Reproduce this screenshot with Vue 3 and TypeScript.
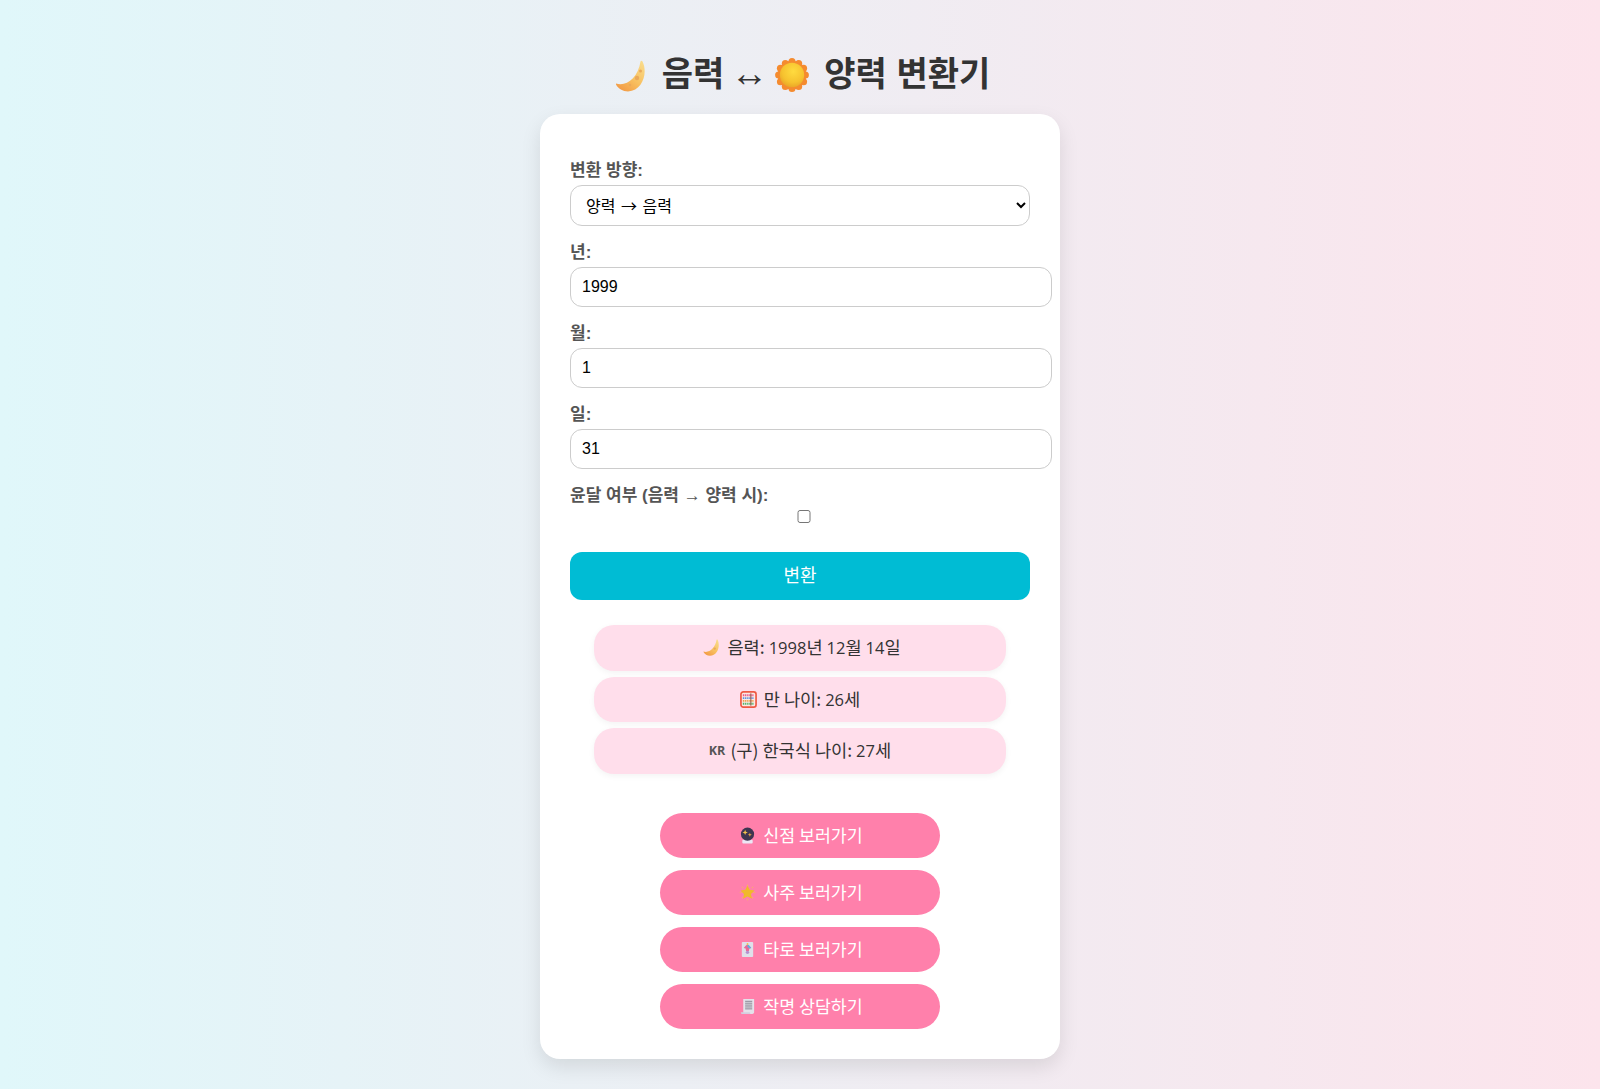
<script setup lang="ts">
import { ref } from 'vue'

const direction = ref('solar')
const year = ref('1999')
const month = ref('1')
const day = ref('31')
const leap = ref(false)

const scallops = Array.from({ length: 12 }, (_, i) => {
  const a = (i * Math.PI) / 6
  return { x: 16 + 12.6 * Math.cos(a), y: 16 + 12.6 * Math.sin(a) }
})
</script>

<template>
  <div class="page">
    <h1 class="title">
      <svg class="ti" viewBox="0 0 32 32">
        <defs>
          <linearGradient id="moonG" x1="0.9" y1="0" x2="0.2" y2="1">
            <stop offset="0" stop-color="#f9dc8c" />
            <stop offset="0.55" stop-color="#f8c060" />
            <stop offset="1" stop-color="#f29a45" />
          </linearGradient>
        </defs>
        <path d="M1 23.500C11 27 23 18 25.500 1.500C26 .5 27 .5 27.500 1.500C33 12 28 31 13 31.500C8 31.500 3 28.500 1 24.500Z" fill="url(#moonG)" />
        <circle cx="22" cy="18" r="2.200" fill="#eaa95a" />
        <circle cx="25.500" cy="11" r="1.500" fill="#eaa95a" />
        <circle cx="15" cy="25" r="1.300" fill="#eaa95a" />
      </svg>
      <span class="word">음력</span>
      <span class="arrow">↔</span>
      <svg class="sun" viewBox="0 0 32 32">
        <defs>
          <radialGradient id="sunG" cx="0.55" cy="0.35" r="0.75">
            <stop offset="0" stop-color="#ffdb3f" />
            <stop offset="0.6" stop-color="#f6c22f" />
            <stop offset="1" stop-color="#e59a24" />
          </radialGradient>
        </defs>
        <circle cx="16" cy="16" r="13.500" fill="#f58b2f" />
        <circle v-for="(s, i) in scallops" :key="i" :cx="s.x" :cy="s.y" r="3.300" fill="#f58b2f" />
        <circle cx="16" cy="16" r="11.500" fill="url(#sunG)" />
      </svg>
      <span class="word">양력 변환기</span>
    </h1>

    <main class="card">
      <label class="field-label">변환 방향:</label>
      <select v-model="direction" class="select">
        <option value="solar">양력 → 음력</option>
        <option value="lunar">음력 → 양력</option>
      </select>

      <label class="field-label">년:</label>
      <input v-model="year" class="text-input" type="number" />
      <label class="field-label">월:</label>
      <input v-model="month" class="text-input" type="number" />
      <label class="field-label">일:</label>
      <input v-model="day" class="text-input" type="number" />

      <label class="field-label">윤달 여부 (음력 → 양력 시):</label>
      <input v-model="leap" class="check" type="checkbox" />

      <button class="convert" type="button"><span class="convert-text">변환</span></button>

      <section class="results">
        <div class="pill pill-shift">
          <svg class="ei" viewBox="0 0 32 32">
            <path d="M1 23.500C11 27 23 18 25.500 1.500C26 .5 27 .5 27.500 1.500C33 12 28 31 13 31.500C8 31.500 3 28.500 1 24.500Z" fill="url(#moonG)" />
            <circle cx="22" cy="18" r="2.200" fill="#eaa95a" />
          </svg>
          <span class="pill-text">음력: <span class="num">1998</span>년 <span class="num">12</span>월 <span class="num">14</span>일</span>
        </div>
        <div class="pill">
          <svg class="ei" viewBox="0 0 18 18">
            <rect x="1" y="1" width="16" height="16" rx="2.500" fill="#fbe9e4" stroke="#ef5a45" stroke-width="1.800" />
            <path d="M3 4.500h12" stroke="#e8578c" stroke-width="2" stroke-dasharray="1.300 .7" />
            <path d="M3 7.500h12" stroke="#5b8fe0" stroke-width="2" stroke-dasharray="1.300 .7" />
            <path d="M3 10.500h12" stroke="#f0a04a" stroke-width="2" stroke-dasharray="1.300 .7" />
            <path d="M3 13.500h12" stroke="#4fb56b" stroke-width="2" stroke-dasharray="1.300 .7" />
            <rect x="11" y="2.500" width="1" height="13" fill="#8a4a3a" />
          </svg>
          <span class="pill-text">만 나이: <span class="num">26</span>세</span>
        </div>
        <div class="pill">
          <span class="kr">KR</span>
          <span class="pill-text">(구) 한국식 나이: <span class="num">27</span>세</span>
        </div>
      </section>

      <nav class="links">
        <a class="link">
          <svg class="li" viewBox="0 0 16 18">
            <rect x="2.500" y="13.500" width="11" height="4" rx="1" fill="#ece6f5" />
            <circle cx="8" cy="7.500" r="7" fill="#3d3550" />
            <path d="M5.500 3l.8 2 2 .8-2 .8-.8 2-.8-2-2-.8 2-.8z" fill="#f3c14b" />
            <path d="M10.500 6l.6 1.600 1.600.6-1.600.6-.6 1.600-.6-1.600-1.600-.6 1.600-.6z" fill="#f0a64a" />
          </svg>
          <span class="link-text">신점 보러가기</span>
        </a>
        <a class="link">
          <svg class="li" viewBox="0 0 18 18">
            <path d="M9 1.500l2.300 4.700 5.200.7-3.800 3.600 1 5.200L9 13.200l-4.700 2.500 1-5.200L1.500 6.900l5.200-.7z" fill="#f0b92a" />
            <path d="M9 0l.6 2.500h-1.200zM18 9l-2.500.6v-1.200zM0 9l2.500-.6v1.200zM9 18l-.6-2.500h1.200zM2.500 2.500l2 1.500-.6.6zM15.500 2.500l-1.500 2-.6-.6zM2.500 15.500l1.500-2 .6.6zM15.500 15.500l-2-1.500.6-.6z" fill="#f5c842" />
          </svg>
          <span class="link-text">사주 보러가기</span>
        </a>
        <a class="link">
          <svg class="li" viewBox="0 0 16 18">
            <rect x="2" y="1" width="12" height="16" rx="1" fill="#dfe0ea" />
            <path d="M4 7.500l2-2.500 2-1.500 2 1.500 2 2.500-2 .5-.5 2.500h-3L6 8z" fill="#e86a9a" />
            <path d="M8 3.500l2 1.500 2 2.500-2 .5-2-2z" fill="#5db4e0" />
            <circle cx="8" cy="3.200" r="1" fill="#f3c14b" />
            <circle cx="8" cy="12" r="1.800" fill="#b48fd0" />
          </svg>
          <span class="link-text">타로 보러가기</span>
        </a>
        <a class="link">
          <svg class="li" viewBox="0 0 16 18">
            <path d="M3.500 1h11.500v13.500a2 2 0 0 1-2 2.500H2.500C4 17 3.500 15 3.500 14z" fill="#e4e2ea" />
            <path d="M1 15h9.500c0 1 .5 2 1.500 2H2.500C1.500 17 1 16 1 15z" fill="#d2cfe0" />
            <path d="M5.500 3.500h7.500M5.500 5.500h7.500M5.500 7.500h7.500M5.500 9.500h7.500M5.500 11.500h7.500" stroke="#85838f" stroke-width="1" />
          </svg>
          <span class="link-text">작명 상담하기</span>
        </a>
      </nav>
    </main>
  </div>
</template>

<style scoped>
.page {
  box-sizing: border-box;
  min-height: 100vh;
  padding: 51px 0 31px;
  display: flex;
  flex-direction: column;
  align-items: center;
  background: linear-gradient(to right, #e0f7fa, #fce4ec);
  font-family: "Open Sans", "Noto Sans CJK KR", sans-serif;
  color: #333;
}

.title {
  margin: 0 0 17px 5px;
  height: 46px;
  display: flex;
  align-items: center;
  font-family: "Noto Sans CJK KR", sans-serif;
  font-size: 34px;
  line-height: 46px;
  font-weight: 700;
  color: #333;
}

.ti {
  width: 32px;
  height: 32px;
  flex: none;
  margin-top: 4px;
}

.sun {
  width: 34px;
  height: 34px;
  flex: none;
  margin-top: 2px;
}

.word {
  margin-left: 15px;
  margin-top: -4px;
  word-spacing: 2px;
}

.arrow {
  margin: -3px 7px 0 6px;
  font-family: "Liberation Sans", sans-serif;
  font-weight: 400;
  font-size: 38px;
}

.card {
  box-sizing: border-box;
  width: 520px;
  padding: 30px;
  background: #fff;
  border-radius: 20px;
  box-shadow: 0 8px 20px rgba(0, 0, 0, 0.1);
}

.field-label {
  display: block;
  margin: 17px 0 4px;
  font-family: "Liberation Sans", "Noto Sans CJK KR", sans-serif;
  font-size: 17px;
  line-height: 20px;
  font-weight: 700;
  color: #555;
}

.select {
  display: block;
  box-sizing: border-box;
  width: 460px;
  height: 41px;
  padding: 0 11px 2px;
  border: 1px solid #ccc;
  border-radius: 12px;
  background: #fff;
  color: #000;
  font-family: "Noto Sans CJK KR", sans-serif;
  font-size: 16px;
  word-spacing: 2px;
}

.text-input {
  display: block;
  box-sizing: border-box;
  width: 482px;
  height: 40px;
  padding: 0 11px;
  border: 1px solid #ccc;
  border-radius: 12px;
  background: #fff;
  color: #000;
  font-family: "Liberation Sans", sans-serif;
  font-size: 16px;
  appearance: textfield;
}

.check {
  display: block;
  width: 460px;
  height: 13px;
  margin: 0 0 0 4px;
}

.convert {
  display: block;
  width: 460px;
  height: 48px;
  margin-top: 29px;
  border: 0;
  border-radius: 12px;
  background: #00bcd4;
  color: #fff;
  font-family: "Noto Sans CJK KR", sans-serif;
  font-size: 18px;
}

.convert-text {
  display: block;
  margin-top: -4px;
}

.results {
  margin-top: 25px;
  display: flex;
  flex-direction: column;
  align-items: center;
  gap: 6px;
}

.pill {
  box-sizing: border-box;
  width: 412px;
  height: 45.500px;
  display: flex;
  align-items: center;
  justify-content: center;
  gap: 7px;
  background: #ffdeeb;
  border-radius: 20px;
  box-shadow: 0 2px 6px rgba(0, 0, 0, 0.05);
  font-family: "Noto Sans CJK KR", sans-serif;
  font-size: 17.600px;
  color: #333;
}

.pill-shift {
  padding-left: 4px;
}

.pill-text {
  margin-top: -2px;
}

.num {
  font-family: "Open Sans", sans-serif;
  font-size: 16.500px;
}

.ei {
  width: 17px;
  height: 17px;
  flex: none;
}

.kr {
  font-family: "Open Sans", sans-serif;
  font-size: 12.500px;
  font-weight: 700;
  color: #555;
  margin-right: -2px;
}

.links {
  margin-top: 39.500px;
  display: flex;
  flex-direction: column;
  align-items: center;
  gap: 12px;
}

.link {
  box-sizing: border-box;
  width: 280px;
  height: 45px;
  padding-left: 2px;
  display: flex;
  align-items: center;
  justify-content: center;
  gap: 7px;
  background: #ff80ab;
  border-radius: 25px;
  color: #fff;
  font-family: "Noto Sans CJK KR", sans-serif;
  font-size: 17.300px;
}

.link-text {
  margin-top: -2px;
}

.li {
  width: 17px;
  height: 17px;
  flex: none;
}
</style>

<style>
html,
body {
  margin: 0;
}
</style>
